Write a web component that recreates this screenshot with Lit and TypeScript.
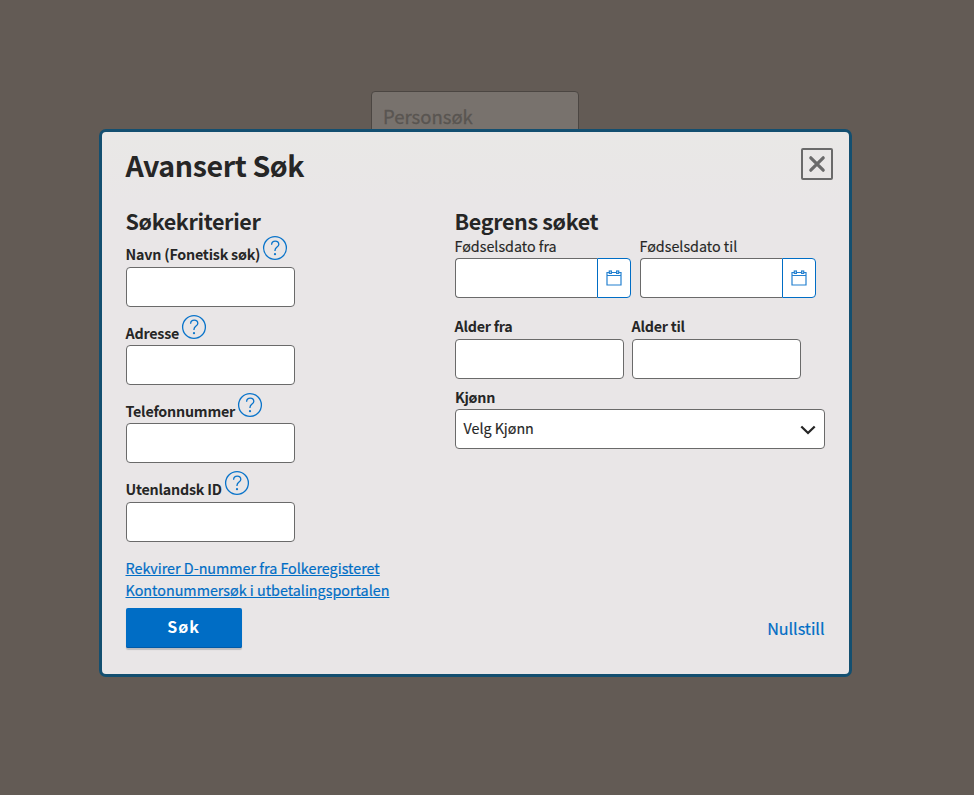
import { LitElement, html, css } from "lit";
import { customElement, property } from "lit/decorators.js";

@customElement("help-icon")
class HelpIcon extends LitElement {
  static styles = css`
    :host { display: block; width: 26px; height: 26px; }
    svg { display: block; }
  `;
  render() {
    return html`<svg width="26" height="26" viewBox="0 0 26 26" fill="none" stroke="#0a74ca" stroke-width="1.3">
      <circle cx="13" cy="13" r="11.4" />
      <path d="M9.6 9.7C9.6 7.5 11.1 6.1 13.2 6.1S16.8 7.5 16.8 9.4C16.8 12 13 12.2 13 15.3V16" />
      <circle cx="13" cy="19.2" r="1.1" fill="#0a74ca" stroke="none" />
    </svg>`;
  }
}

@customElement("text-field")
class TextField extends LitElement {
  @property() label = "";
  @property({ type: Boolean }) help = false;
  static styles = css`
    :host { display: block; }
    .label { display: flex; align-items: flex-end; font-weight: 600; font-size: 14.3px; letter-spacing: -0.24px; line-height: 20px; height: 20px; white-space: nowrap; }
    .label.help { height: 31px; }
    .text { display: block; margin: 0 0 3px -0.5px; }
    .help .text { margin-bottom: 2.6px; letter-spacing: -0.22px; }
    help-icon { margin: 0 0 5.6px 2.2px; }
    input { display: block; box-sizing: border-box; width: 169px; height: 40px; margin: 0; border: 1px solid #6a6a6a; border-radius: 4px; background: #fff; }
  `;
  render() {
    return html`<label class=${this.help ? "label help" : "label"}><span class="text">${this.label}</span>${this.help ? html`<help-icon></help-icon>` : ""}</label><input />`;
  }
}

@customElement("date-field")
class DateField extends LitElement {
  @property() label = "";
  static styles = css`
    :host { display: block; }
    .label { display: block; margin-left: -0.5px; font-size: 14.3px; line-height: 20px; height: 22px; white-space: nowrap; -webkit-text-stroke: 0.15px; }
    .group { display: flex; width: 176px; height: 40px; }
    input { box-sizing: border-box; width: 142px; height: 40px; margin: 0; border: 1px solid #6a6a6a; border-right: 0; border-radius: 4px 0 0 4px; background: #fff; }
    button { box-sizing: border-box; display: flex; align-items: center; justify-content: center; width: 34px; height: 40px; padding: 0; border: 1px solid #006dc5; border-radius: 0 4px 4px 0; background: #fff; }
  `;
  render() {
    return html`<label class="label">${this.label}</label>
      <div class="group"><input /><button aria-label="Kalender">
        <svg width="16" height="16" viewBox="0 0 16 16" fill="none" stroke="#2380d0" stroke-width="1.2">
          <path d="M3 2.5H1V15H15V2.5H13M5.5 2.5H10.5M1 5.5H15" />
          <rect x="3.3" y="1" width="2.1" height="2.4" />
          <rect x="10.6" y="1" width="2.1" height="2.4" />
        </svg></button></div>`;
  }
}

@customElement("app-root")
class AppRoot extends LitElement {
  static styles = css`
    :host { display: block; height: 795px; overflow: hidden; background: #635b55; color: #262626; font-family: "Noto Sans CJK SC", "Noto Sans", sans-serif; }
    .page { position: relative; box-sizing: border-box; height: 795px; padding-top: 91px; }
    .search { box-sizing: border-box; width: 208px; height: 50px; margin: 0 0 0 371px; padding-left: 11px; border: 1px solid #4b4642; border-radius: 4px; background: #78726d; color: #595551; font-size: 18.5px; line-height: 48px; -webkit-text-stroke: 0.3px; }
    .modal { position: absolute; left: 99px; top: 129px; box-sizing: border-box; width: 753px; height: 548px; border: 3px solid #134f70; border-radius: 7px; background: linear-gradient(#e9e8e6, #e9e6e7 70px); padding: 13px 16px 0 24px; }
    .head { display: flex; justify-content: space-between; height: 61px; }
    h1, h2 { margin: 0 0 0 -0.5px; font-weight: 600; white-space: nowrap; }
    h1 { font-size: 28.6px; line-height: 40px; letter-spacing: -0.42px; }
    h2 { font-size: 21.5px; line-height: 30px; letter-spacing: -0.35px; }
    .close { box-sizing: border-box; display: flex; align-items: center; justify-content: center; width: 32px; height: 32px; margin-top: 3px; padding: 0; border: 2px solid #6a6a6a; border-radius: 2px; background: transparent; }
    .cols { display: grid; grid-template-columns: 329px 370px; height: 351px; }
    .fields { display: flex; flex-direction: column; gap: 7.2px; }
    .row { display: flex; gap: 9px; }
    .ages { gap: 8px; margin-top: 21px; }
    .kjonn { height: 20px; margin: 8px 0 2px; font-size: 14.3px; line-height: 20px; font-weight: 600; letter-spacing: -0.24px; }
    .select { box-sizing: border-box; display: flex; align-items: center; justify-content: space-between; height: 40px; padding: 0 7px 0 7.5px; border: 1px solid #6a6a6a; border-radius: 4px; background: #fff; font-size: 14.3px; line-height: 20px; -webkit-text-stroke: 0.15px; }
    .select span { padding-bottom: 2px; }
    .links { display: flex; flex-direction: column; align-items: flex-start; margin-left: -0.5px; }
    a { color: #006dc5; font-size: 14.33px; line-height: 22px; white-space: nowrap; -webkit-text-stroke: 0.2px; }
    .foot { display: flex; justify-content: space-between; width: 699px; margin-top: 7px; }
    .primary { width: 116px; height: 40px; padding: 0 1px 4px 0; border: 0; border-radius: 2px; background: #006dc5; box-shadow: inset 0 -1px #005aa8, 0 2px 1px #bdbdc0; color: #fff; font: 700 16px/36px "Noto Sans CJK SC", sans-serif; letter-spacing: 1px; }
    .reset { margin-right: 0.5px; color: #006dc5; font-size: 16.1px; line-height: 40px; -webkit-text-stroke: 0.2px; }
  `;
  render() {
    return html`<div class="page">
      <div class="search">Personsøk</div>
      <section class="modal">
        <header class="head"><h1>Avansert Søk</h1>
          <button class="close" aria-label="Lukk"><svg width="18" height="18" viewBox="0 0 18 18" stroke="#6a6a6a" stroke-width="3.2" stroke-linecap="round"><path d="M2.8 2.8L15.2 15.2M15.2 2.8L2.8 15.2" /></svg></button>
        </header>
        <div class="cols">
          <div><h2>Søkekriterier</h2>
            <div class="fields">
              <text-field help label="Navn (Fonetisk søk)"></text-field>
              <text-field help label="Adresse"></text-field>
              <text-field help label="Telefonnummer"></text-field>
              <text-field help label="Utenlandsk ID"></text-field>
            </div>
          </div>
          <div><h2>Begrens søket</h2>
            <div class="row"><date-field label="Fødselsdato fra"></date-field><date-field label="Fødselsdato til"></date-field></div>
            <div class="row ages"><text-field label="Alder fra"></text-field><text-field label="Alder til"></text-field></div>
            <div class="kjonn">Kjønn</div>
            <div class="select"><span>Velg Kjønn</span><svg width="18" height="18" viewBox="0 0 18 18" fill="none" stroke="#262626" stroke-width="2.3"><path d="M2.3 6.5L9 13L15.7 6.5" /></svg></div>
          </div>
        </div>
        <div class="links"><a href="#">Rekvirer D-nummer fra Folkeregisteret</a><a href="#">Kontonummersøk i utbetalingsportalen</a></div>
        <div class="foot"><button class="primary">Søk</button><span class="reset">Nullstill</span></div>
      </section>
    </div>`;
  }
}
